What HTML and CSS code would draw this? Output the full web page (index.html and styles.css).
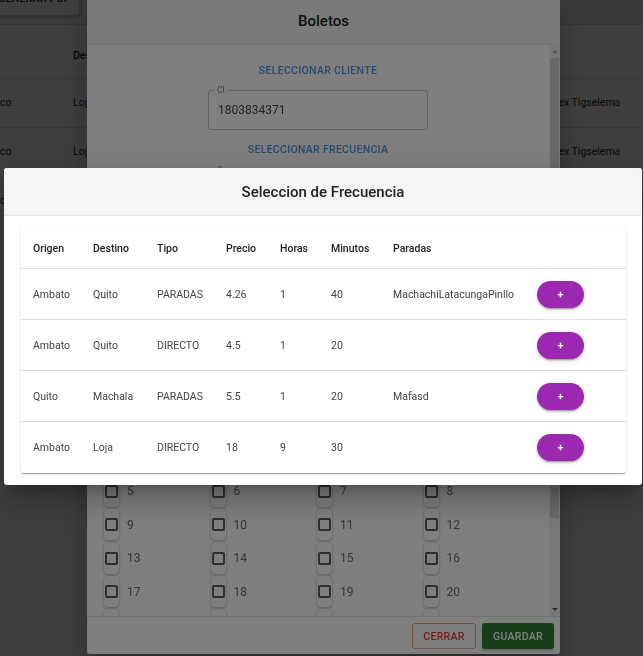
FILE: index.html
```html
<!DOCTYPE html>
<html lang="es">
<head>
<meta charset="utf-8">
<title>Boletos</title>
<link rel="stylesheet" href="styles.css">
</head>
<body>
<div class="page">
  <div class="toolbar">
    <button class="pdf-btn" type="button">GENERAR PDF</button>
  </div>
  <div class="paper">
    <table class="list">
      <colgroup><col class="lc1"><col class="lc2"><col class="lc3"><col class="lc4"></colgroup>
      <thead>
        <tr><th>Origen</th><th>Destino</th><th>Fecha</th><th></th></tr>
      </thead>
      <tbody>
        <tr><td>Francisco</td><td>Loja</td><td>2021-07-20</td><td>Alex Tigselema</td></tr>
        <tr><td>Francisco</td><td>Loja</td><td>2021-07-21</td><td>Alex Tigselema</td></tr>
        <tr><td>Francisco</td><td>Loja</td><td>2021-07-22</td><td>Alex Tigselema</td></tr>
      </tbody>
    </table>
  </div>
</div>

<div class="backdrop"></div>

<div class="dialog boletos">
  <div class="dlg-head">Boletos</div>
  <div class="dlg-body">
    <div class="dlg-content">
      <button class="link-btn" type="button">Seleccionar cliente</button>
      <fieldset class="field">
        <legend>CI</legend>
        <div class="field-value">1803834371</div>
      </fieldset>
      <button class="link-btn btn-second" type="button">Seleccionar frecuencia</button>
      <fieldset class="field field-first">
        <legend>Origen</legend>
        <div class="field-value">Ambato</div>
      </fieldset>
      <fieldset class="field field-next">
        <legend>Destino</legend>
        <div class="field-value">Quito</div>
      </fieldset>
      <fieldset class="field field-next">
        <legend>Fecha</legend>
        <div class="field-value">2021-07-20</div>
      </fieldset>
      <fieldset class="field field-next">
        <legend>Precio</legend>
        <div class="field-value">4.26</div>
      </fieldset>
      <div class="seats-title">Asientos</div>
      <div class="seats">
        <label class="seat"><span class="pill"><span class="box"></span></span><span class="num">1</span></label>
        <label class="seat"><span class="pill"><span class="box"></span></span><span class="num">2</span></label>
        <label class="seat"><span class="pill"><span class="box"></span></span><span class="num">3</span></label>
        <label class="seat"><span class="pill"><span class="box"></span></span><span class="num">4</span></label>
        <label class="seat"><span class="pill"><span class="box"></span></span><span class="num">5</span></label>
        <label class="seat"><span class="pill"><span class="box"></span></span><span class="num">6</span></label>
        <label class="seat"><span class="pill"><span class="box"></span></span><span class="num">7</span></label>
        <label class="seat"><span class="pill"><span class="box"></span></span><span class="num">8</span></label>
        <label class="seat"><span class="pill"><span class="box"></span></span><span class="num">9</span></label>
        <label class="seat"><span class="pill"><span class="box"></span></span><span class="num">10</span></label>
        <label class="seat"><span class="pill"><span class="box"></span></span><span class="num">11</span></label>
        <label class="seat"><span class="pill"><span class="box"></span></span><span class="num">12</span></label>
        <label class="seat"><span class="pill"><span class="box"></span></span><span class="num">13</span></label>
        <label class="seat"><span class="pill"><span class="box"></span></span><span class="num">14</span></label>
        <label class="seat"><span class="pill"><span class="box"></span></span><span class="num">15</span></label>
        <label class="seat"><span class="pill"><span class="box"></span></span><span class="num">16</span></label>
        <label class="seat"><span class="pill"><span class="box"></span></span><span class="num">17</span></label>
        <label class="seat"><span class="pill"><span class="box"></span></span><span class="num">18</span></label>
        <label class="seat"><span class="pill"><span class="box"></span></span><span class="num">19</span></label>
        <label class="seat"><span class="pill"><span class="box"></span></span><span class="num">20</span></label>
        <label class="seat"><span class="pill"><span class="box"></span></span><span class="num">21</span></label>
        <label class="seat"><span class="pill"><span class="box"></span></span><span class="num">22</span></label>
        <label class="seat"><span class="pill"><span class="box"></span></span><span class="num">23</span></label>
        <label class="seat"><span class="pill"><span class="box"></span></span><span class="num">24</span></label>
      </div>
    </div>
    <div class="scrollbar">
      <div class="sb-btn"><span class="arrow-up"></span></div>
      <div class="sb-thumb"></div>
      <div class="sb-track"></div>
      <div class="sb-btn"><span class="arrow-down"></span></div>
    </div>
  </div>
  <div class="dlg-foot">
    <button class="btn-cerrar" type="button">Cerrar</button>
    <button class="btn-guardar" type="button">Guardar</button>
  </div>
</div>

<div class="backdrop"></div>

<div class="dialog freq">
  <div class="dlg-head">Seleccion de Frecuencia</div>
  <div class="freq-body">
    <div class="card">
      <table class="freq-table">
        <colgroup>
          <col class="fc1"><col class="fc2"><col class="fc3"><col class="fc4">
          <col class="fc5"><col class="fc6"><col class="fc7"><col>
        </colgroup>
        <thead>
          <tr><th>Origen</th><th>Destino</th><th>Tipo</th><th>Precio</th><th>Horas</th><th>Minutos</th><th>Paradas</th><th></th></tr>
        </thead>
        <tbody>
          <tr><td>Ambato</td><td>Quito</td><td>PARADAS</td><td>4.26</td><td>1</td><td>40</td><td>MachachiLatacungaPinllo</td><td><button class="add-btn" type="button">+</button></td></tr>
          <tr><td>Ambato</td><td>Quito</td><td>DIRECTO</td><td>4.5</td><td>1</td><td>20</td><td></td><td><button class="add-btn" type="button">+</button></td></tr>
          <tr><td>Quito</td><td>Machala</td><td>PARADAS</td><td>5.5</td><td>1</td><td>20</td><td>Mafasd</td><td><button class="add-btn" type="button">+</button></td></tr>
          <tr><td>Ambato</td><td>Loja</td><td>DIRECTO</td><td>18</td><td>9</td><td>30</td><td></td><td><button class="add-btn" type="button">+</button></td></tr>
        </tbody>
      </table>
    </div>
  </div>
</div>
</body>
</html>
```

FILE: styles.css
```css
* { box-sizing: border-box; }

html, body {
  margin: 0;
  padding: 0;
}

body {
  width: 643px;
  height: 656px;
  overflow: hidden;
  position: relative;
  font-family: Roboto, "Liberation Sans", sans-serif;
  background: #ebebeb;
}

button {
  font-family: inherit;
  cursor: pointer;
}

/* ---------- page behind the dialogs ---------- */
.page {
  height: 100%;
  overflow: hidden;
  background: #ebebeb;
}

.toolbar {
  display: flow-root;
  height: 24px;
}

.pdf-btn {
  display: block;
  width: 92px;
  height: 36px;
  margin: -20px 0 0 -12px;
  background: #fff;
  border: 1px solid #d0d0d0;
  border-radius: 4px;
  box-shadow: 0 1px 3px rgba(0, 0, 0, 0.25);
  font-size: 10.5px;
  font-weight: 500;
  letter-spacing: 0.3px;
  color: #222;
}

.paper {
  background: #fff;
  height: calc(100% - 24px);
  padding-top: 10px;
  box-shadow: inset 0 1px 0 rgba(0, 0, 0, 0.15);
}

.list {
  border-collapse: collapse;
  table-layout: fixed;
  width: 733px;
  margin-left: -50px;
  font-size: 10.5px;
  color: #222;
}

.lc1 { width: 107px; }
.lc2 { width: 300px; }
.lc3 { width: 176px; }
.lc4 { width: 150px; }

.list th {
  height: 44px;
  padding: 0 0 0 16px;
  text-align: left;
  font-weight: 500;
  border-bottom: 1px solid #e0e0e0;
}

.list th:first-child {
  color: #1565c0;
}

.list td {
  height: 49px;
  padding: 0 0 0 16px;
  border-bottom: 1px solid #e0e0e0;
  white-space: nowrap;
}

/* ---------- backdrops and dialogs ---------- */
.backdrop {
  position: fixed;
  inset: 0;
  background: rgba(0, 0, 0, 0.5);
}

.dialog {
  position: absolute;
  background: #fff;
  border-radius: 3px;
  box-shadow: 0 9px 34px 3px rgba(0, 0, 0, 0.14), 0 11px 11px -7px rgba(0, 0, 0, 0.2), 0 18px 28px 2px rgba(0, 0, 0, 0.12);
  display: flex;
  flex-direction: column;
  overflow: hidden;
}

.dlg-head {
  flex: none;
  height: 48px;
  background: #f5f5f5;
  border-bottom: 1px solid #e6e6e6;
  display: flex;
  align-items: center;
  justify-content: center;
  font-size: 15px;
  font-weight: 500;
  color: #212121;
}

/* Boletos */
.boletos {
  left: 87px;
  top: -3px;
  width: 473px;
  height: 657px;
}

.dlg-body {
  flex: 1;
  display: flex;
  min-height: 0;
}

.dlg-content {
  flex: 1;
  overflow: hidden;
  padding-top: 10px;
  display: flex;
  flex-direction: column;
  align-items: center;
}

.link-btn {
  flex: none;
  height: 30px;
  padding: 0 8px;
  background: transparent;
  border: 0;
  font-size: 10.5px;
  font-weight: 500;
  letter-spacing: 0.3px;
  text-transform: uppercase;
  color: #4a94dc;
}

.btn-second { margin-top: 4px; }

.field {
  flex: none;
  width: 220px;
  margin: 0;
  padding: 0 9px 4px;
  min-width: 0;
  border: 1px solid #c4c4c4;
  border-radius: 3px;
}

.field legend {
  margin-left: -4px;
  padding: 0 3px;
  font-size: 8.5px;
  line-height: 10px;
  color: #777;
}

.field-value {
  height: 30px;
  line-height: 30px;
  font-size: 12px;
  color: #444;
}

.field-first { margin-top: 1px; }
.field-next { margin-top: 10px; }

.seats-title {
  flex: none;
  height: 20px;
  margin-top: 10px;
  font-size: 12px;
  color: #666;
}

.seats {
  flex: none;
  align-self: stretch;
  margin-top: 37.5px;
  padding: 0 19px 0 17px;
  display: grid;
  grid-template-columns: repeat(4, 1fr);
  row-gap: 2.4px;
}

.seat {
  display: flex;
  align-items: center;
  height: 31px;
}

.pill {
  width: 15px;
  height: 31px;
  border-radius: 4px;
  background: #fff;
  box-shadow: 0 1px 3px rgba(0, 0, 0, 0.28), 0 0 1px rgba(0, 0, 0, 0.15);
  display: flex;
  align-items: center;
  justify-content: center;
}

.box {
  width: 13px;
  height: 13px;
  border: 2px solid #5c5c5c;
  border-radius: 2px;
}

.num {
  margin-left: 8px;
  font-size: 12px;
  color: #6a6a6a;
}

/* fake scrollbar */
.scrollbar {
  flex: none;
  width: 11px;
  background: #f1f1f1;
  display: flex;
  flex-direction: column;
}

.sb-btn {
  height: 13px;
  display: flex;
  align-items: center;
  justify-content: center;
}

.arrow-up {
  width: 0;
  height: 0;
  border-left: 3px solid transparent;
  border-right: 3px solid transparent;
  border-bottom: 3px solid #a3a3a3;
}

.arrow-down {
  width: 0;
  height: 0;
  border-left: 3px solid transparent;
  border-right: 3px solid transparent;
  border-top: 3px solid #505050;
}

.sb-thumb {
  height: 460px;
  margin: 0 1px;
  background: #d2d2d2;
}

.sb-track { flex: 1; }

.dlg-foot {
  flex: none;
  height: 38px;
  border-top: 1px solid #e0e0e0;
  padding: 6px 6px 0 0;
  display: flex;
  justify-content: flex-end;
  align-items: flex-start;
  gap: 6px;
}

.btn-cerrar,
.btn-guardar {
  height: 26px;
  border-radius: 3px;
  font-size: 10.5px;
  font-weight: 500;
  letter-spacing: 0.3px;
  text-transform: uppercase;
}

.btn-cerrar {
  width: 64px;
  background: #fff;
  border: 1px solid #f29a94;
  color: #e53935;
}

.btn-guardar {
  width: 72px;
  background: #2e7d32;
  border: 0;
  color: #fff;
  box-shadow: 0 2px 2px rgba(0, 0, 0, 0.2);
}

/* Seleccion de Frecuencia */
.freq {
  left: 4px;
  top: 168px;
  width: 638px;
}

.freq-body {
  padding: 12px 16px 12px 17px;
}

.card {
  border-radius: 3px;
  background: #fff;
  box-shadow: 0 2px 1px -1px rgba(0, 0, 0, 0.2), 0 1px 1px 0 rgba(0, 0, 0, 0.14), 0 1px 3px 0 rgba(0, 0, 0, 0.12);
}

.freq-table {
  width: 100%;
  table-layout: fixed;
  border-collapse: separate;
  border-spacing: 0;
  font-size: 10.5px;
}

.fc1 { width: 60px; }
.fc2 { width: 64px; }
.fc3 { width: 69px; }
.fc4 { width: 54px; }
.fc5 { width: 51px; }
.fc6 { width: 62px; }
.fc7 { width: 144px; }

.freq-table th {
  height: 41px;
  padding: 0 0 0 12px;
  text-align: left;
  font-weight: 500;
  color: #222;
  border-bottom: 1px solid #e0e0e0;
}

.freq-table td {
  height: 51px;
  padding: 0 0 0 12px;
  color: #424242;
  border-bottom: 1px solid #e0e0e0;
  white-space: nowrap;
}

.freq-table tbody tr:last-child td {
  border-bottom: 0;
}

.add-btn {
  display: block;
  width: 47px;
  height: 27px;
  border: 0;
  border-radius: 14px;
  background: #9c27b0;
  color: #fff;
  font-size: 11px;
  font-weight: 700;
  line-height: 27px;
  padding: 0;
  box-shadow: 0 3px 1px -2px rgba(0, 0, 0, 0.2), 0 2px 2px 0 rgba(0, 0, 0, 0.14), 0 1px 5px 0 rgba(0, 0, 0, 0.12);
}
```
